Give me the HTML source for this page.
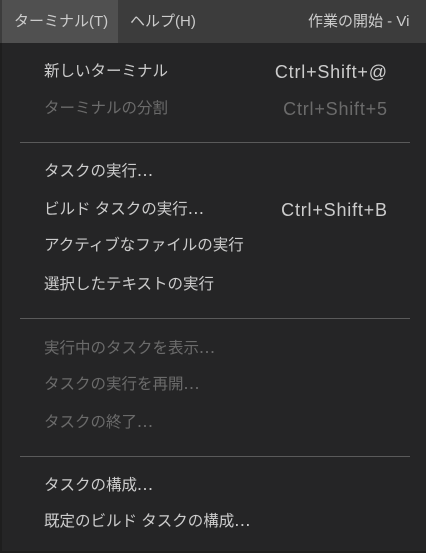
<!DOCTYPE html>
<html><head><meta charset="utf-8"><style>
*{margin:0;padding:0;box-sizing:border-box}
body{width:426px;height:553px;background:#252526;overflow:hidden;font-family:"Liberation Sans","Noto Sans CJK JP",sans-serif;font-size:15.5px;color:#cccccc;position:relative}
.bar{position:absolute;left:0;top:0;width:426px;height:43px;background:#3c3c3c}
.bar span{position:absolute;top:0;height:43px;line-height:43px;color:#cccccc;white-space:nowrap;font-size:15px}
.act{left:2px;width:116px;background:#505050;padding-left:12px}
.edge{position:absolute;left:0;top:43px;width:2px;height:510px;background:#1e1e1e}
.bot{position:absolute;left:0;top:551px;width:426px;height:2px;background:#1e1e1e}
.it{position:absolute;left:44px;height:24px;line-height:24px;white-space:nowrap}
.it i{font-style:normal;font-size:18px;letter-spacing:0.5px;line-height:0}
.sc{position:absolute;right:39px;height:24px;line-height:24px;font-size:18px;letter-spacing:0.8px;margin-right:-0.8px}
.d{color:#6b6b6b}
.sep{position:absolute;left:20px;width:390px;height:1px;background:#5a5a5a}
</style></head><body>
<div class="bar">
<span class="act">ターミナル(T)</span>
<span style="left:130px">ヘルプ(H)</span>
<span style="left:308px">作業の開始 - Vi</span>
</div>
<div class="edge"></div>
<div class="it" style="top:60px">新しいターミナル</div><div class="sc" style="top:60px">Ctrl+Shift+@</div>
<div class="it d" style="top:97px">ターミナルの分割</div><div class="sc d" style="top:97px">Ctrl+Shift+5</div>
<div class="sep" style="top:142px"></div>
<div class="it" style="top:160px">タスクの実行<i>...</i></div>
<div class="it" style="top:198px">ビルド タスクの実行<i>...</i></div><div class="sc" style="top:198px">Ctrl+Shift+B</div>
<div class="it" style="top:234px">アクティブなファイルの実行</div>
<div class="it" style="top:273px">選択したテキストの実行</div>
<div class="sep" style="top:318px"></div>
<div class="it d" style="top:337px">実行中のタスクを表示<i>...</i></div>
<div class="it d" style="top:373px">タスクの実行を再開<i>...</i></div>
<div class="it d" style="top:411px">タスクの終了<i>...</i></div>
<div class="sep" style="top:456px"></div>
<div class="it" style="top:474px">タスクの構成<i>...</i></div>
<div class="it" style="top:510px">既定のビルド タスクの構成<i>...</i></div>
<div class="bot"></div>
</body></html>
